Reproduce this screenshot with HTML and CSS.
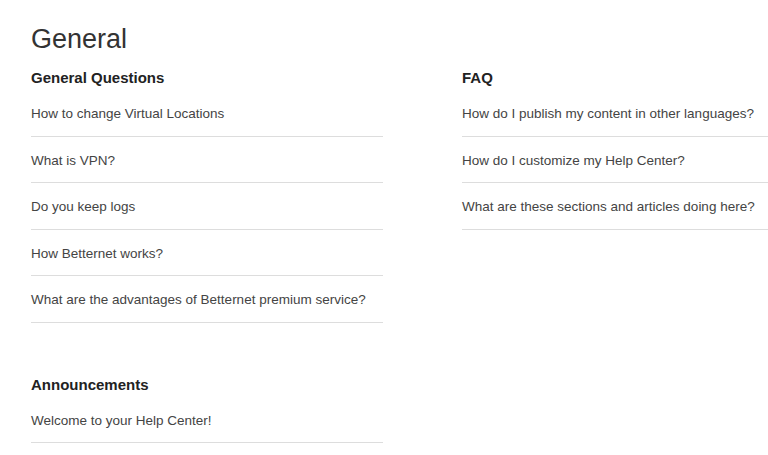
FILE: index.html
```html
<!DOCTYPE html>
<html lang="en">
<head>
<meta charset="utf-8">
<title>General</title>
<link rel="stylesheet" href="styles.css">
</head>
<body>
<main class="page">
  <h1 class="title">General</h1>
  <div class="grid">
    <section class="section">
      <h2 class="section-title">General Questions</h2>
      <ul class="articles">
        <li><a href="#">How to change Virtual Locations</a></li>
        <li><a href="#">What is VPN?</a></li>
        <li><a href="#">Do you keep logs</a></li>
        <li><a href="#">How Betternet works?</a></li>
        <li><a href="#">What are the advantages of Betternet premium service?</a></li>
      </ul>
    </section>
    <section class="section">
      <h2 class="section-title">FAQ</h2>
      <ul class="articles">
        <li><a href="#">How do I publish my content in other languages?</a></li>
        <li><a href="#">How do I customize my Help Center?</a></li>
        <li><a href="#">What are these sections and articles doing here?</a></li>
      </ul>
    </section>
    <section class="section section-later">
      <h2 class="section-title">Announcements</h2>
      <ul class="articles">
        <li><a href="#">Welcome to your Help Center!</a></li>
      </ul>
    </section>
  </div>
</main>
</body>
</html>
```
FILE: styles.css
```css
html, body {
  margin: 0;
  padding: 0;
  overflow: hidden;
  background: #fff;
}
body {
  font-family: "Liberation Sans", Arial, sans-serif;
  color: #333;
}
.page {
  padding: 24px 0 0 31px;
}
.title {
  margin: 0;
  font-size: 27px;
  font-weight: normal;
  line-height: 31px;
  color: #333;
}
.grid {
  display: grid;
  grid-template-columns: 352px 1fr;
  column-gap: 79px;
  margin-top: 13px;
}
.section-title {
  margin: 0;
  font-size: 15px;
  font-weight: bold;
  line-height: 20px;
  color: #222;
}
.section-later {
  margin-top: 52px;
}
.articles {
  list-style: none;
  margin: 0;
  padding: 0;
}
.articles li {
  padding: 14px 0 11.5px;
  border-bottom: 1px solid #ddd;
  font-size: 13.5px;
  line-height: 20px;
}
.articles li:first-child {
  padding-top: 16px;
}
.articles a {
  color: #444;
  text-decoration: none;
}
```
